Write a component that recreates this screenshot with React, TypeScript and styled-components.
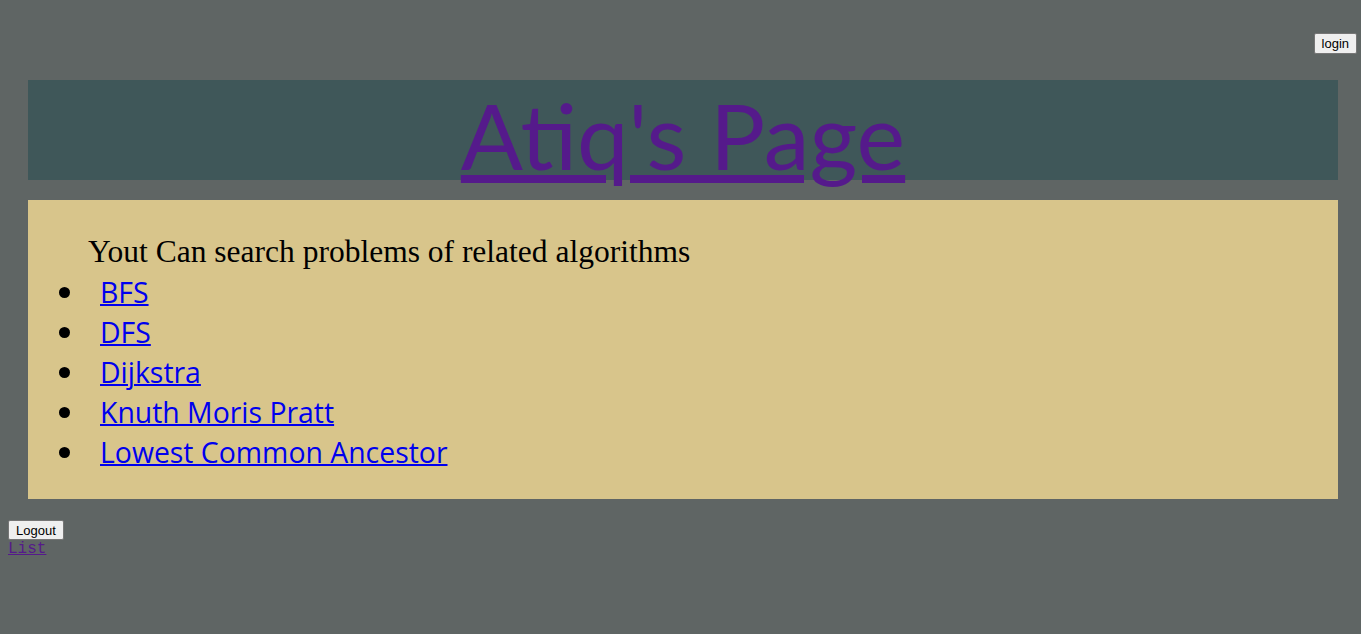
import React from "react";
import styled, { createGlobalStyle } from "styled-components";

const Global = createGlobalStyle`
  html, body { margin: 0; padding: 0; }
  body { background: #5f6564; font-family: "Liberation Serif", serif; }
`;

const TopBar = styled.div`
  height: 80px;
  box-sizing: border-box;
  padding: 33px 4px 0 0;
  display: flex;
  justify-content: flex-end;
  align-items: flex-start;
`;

const Btn = styled.button<{ $h?: number }>`
  font-family: "Liberation Sans", Arial, sans-serif;
  font-size: 13px;
  height: ${(p) => p.$h ?? 20}px;
  padding: 0 7px;
  background: #efefef;
  color: #000;
  border: 1px solid #767676;
  border-radius: 2px;
  box-sizing: border-box;
`;

const Header = styled.header`
  margin: 0 23px 0 28px;
  height: 100px;
  background: #3f5759;
  text-align: center;
`;

const Title = styled.a`
  font-family: Lato, "Noto Sans", sans-serif;
  font-size: 92px;
  line-height: 100px;
  color: #551a8b;
  text-decoration: underline;
  text-decoration-thickness: 8px;
  text-underline-offset: 5px;
  display: inline-block;
  transform: translateY(5px);
`;

const Content = styled.section`
  margin: 20px 23px 0 28px;
  height: 299px;
  background: #d8c58b;
  box-sizing: border-box;
  padding-top: 32px;
`;

const Intro = styled.p`
  margin: 0 0 0 60px;
  font-family: "Liberation Serif", serif;
  font-size: 31.5px;
  line-height: 40px;
  color: #000;
`;

const List = styled.ul`
  margin: 0;
  padding: 0 0 0 31px;
  list-style: none;
`;

const Item = styled.li`
  display: flex;
  align-items: center;
  font-family: "Open Sans", "Noto Sans", sans-serif;
  font-size: 28.4px;
  line-height: 40px;
  color: #000;
  &::before {
    content: "";
    width: 11px;
    height: 11px;
    border-radius: 50%;
    background: #000;
    margin-right: 30px;
    flex: none;
  }
`;

const ItemLink = styled.a`
  color: #0000ee;
  text-decoration: underline;
  text-decoration-thickness: 2px;
`;

const Footer = styled.div`
  padding: 21px 8px 0 8px;
  display: flex;
  flex-direction: column;
  align-items: flex-start;
`;

const SmallLink = styled.a`
  font-family: "Liberation Mono", monospace;
  font-size: 16px;
  line-height: 18px;
  color: #551a8b;
  text-decoration: underline;
`;

const algos = ["BFS", "DFS", "Dijkstra", "Knuth Moris Pratt", "Lowest Common Ancestor"];

export default function App() {
  return (
    <>
      <Global />
      <TopBar>
        <Btn $h={21}>login</Btn>
      </TopBar>
      <Header>
        <Title href="#">Atiq's Page</Title>
      </Header>
      <Content>
        <Intro>Yout Can search problems of related algorithms</Intro>
        <List>
          {algos.map((a) => (
            <Item key={a}>
              <ItemLink href="#">{a}</ItemLink>
            </Item>
          ))}
        </List>
      </Content>
      <Footer>
        <Btn>Logout</Btn>
        <SmallLink href="#">List</SmallLink>
      </Footer>
    </>
  );
}
